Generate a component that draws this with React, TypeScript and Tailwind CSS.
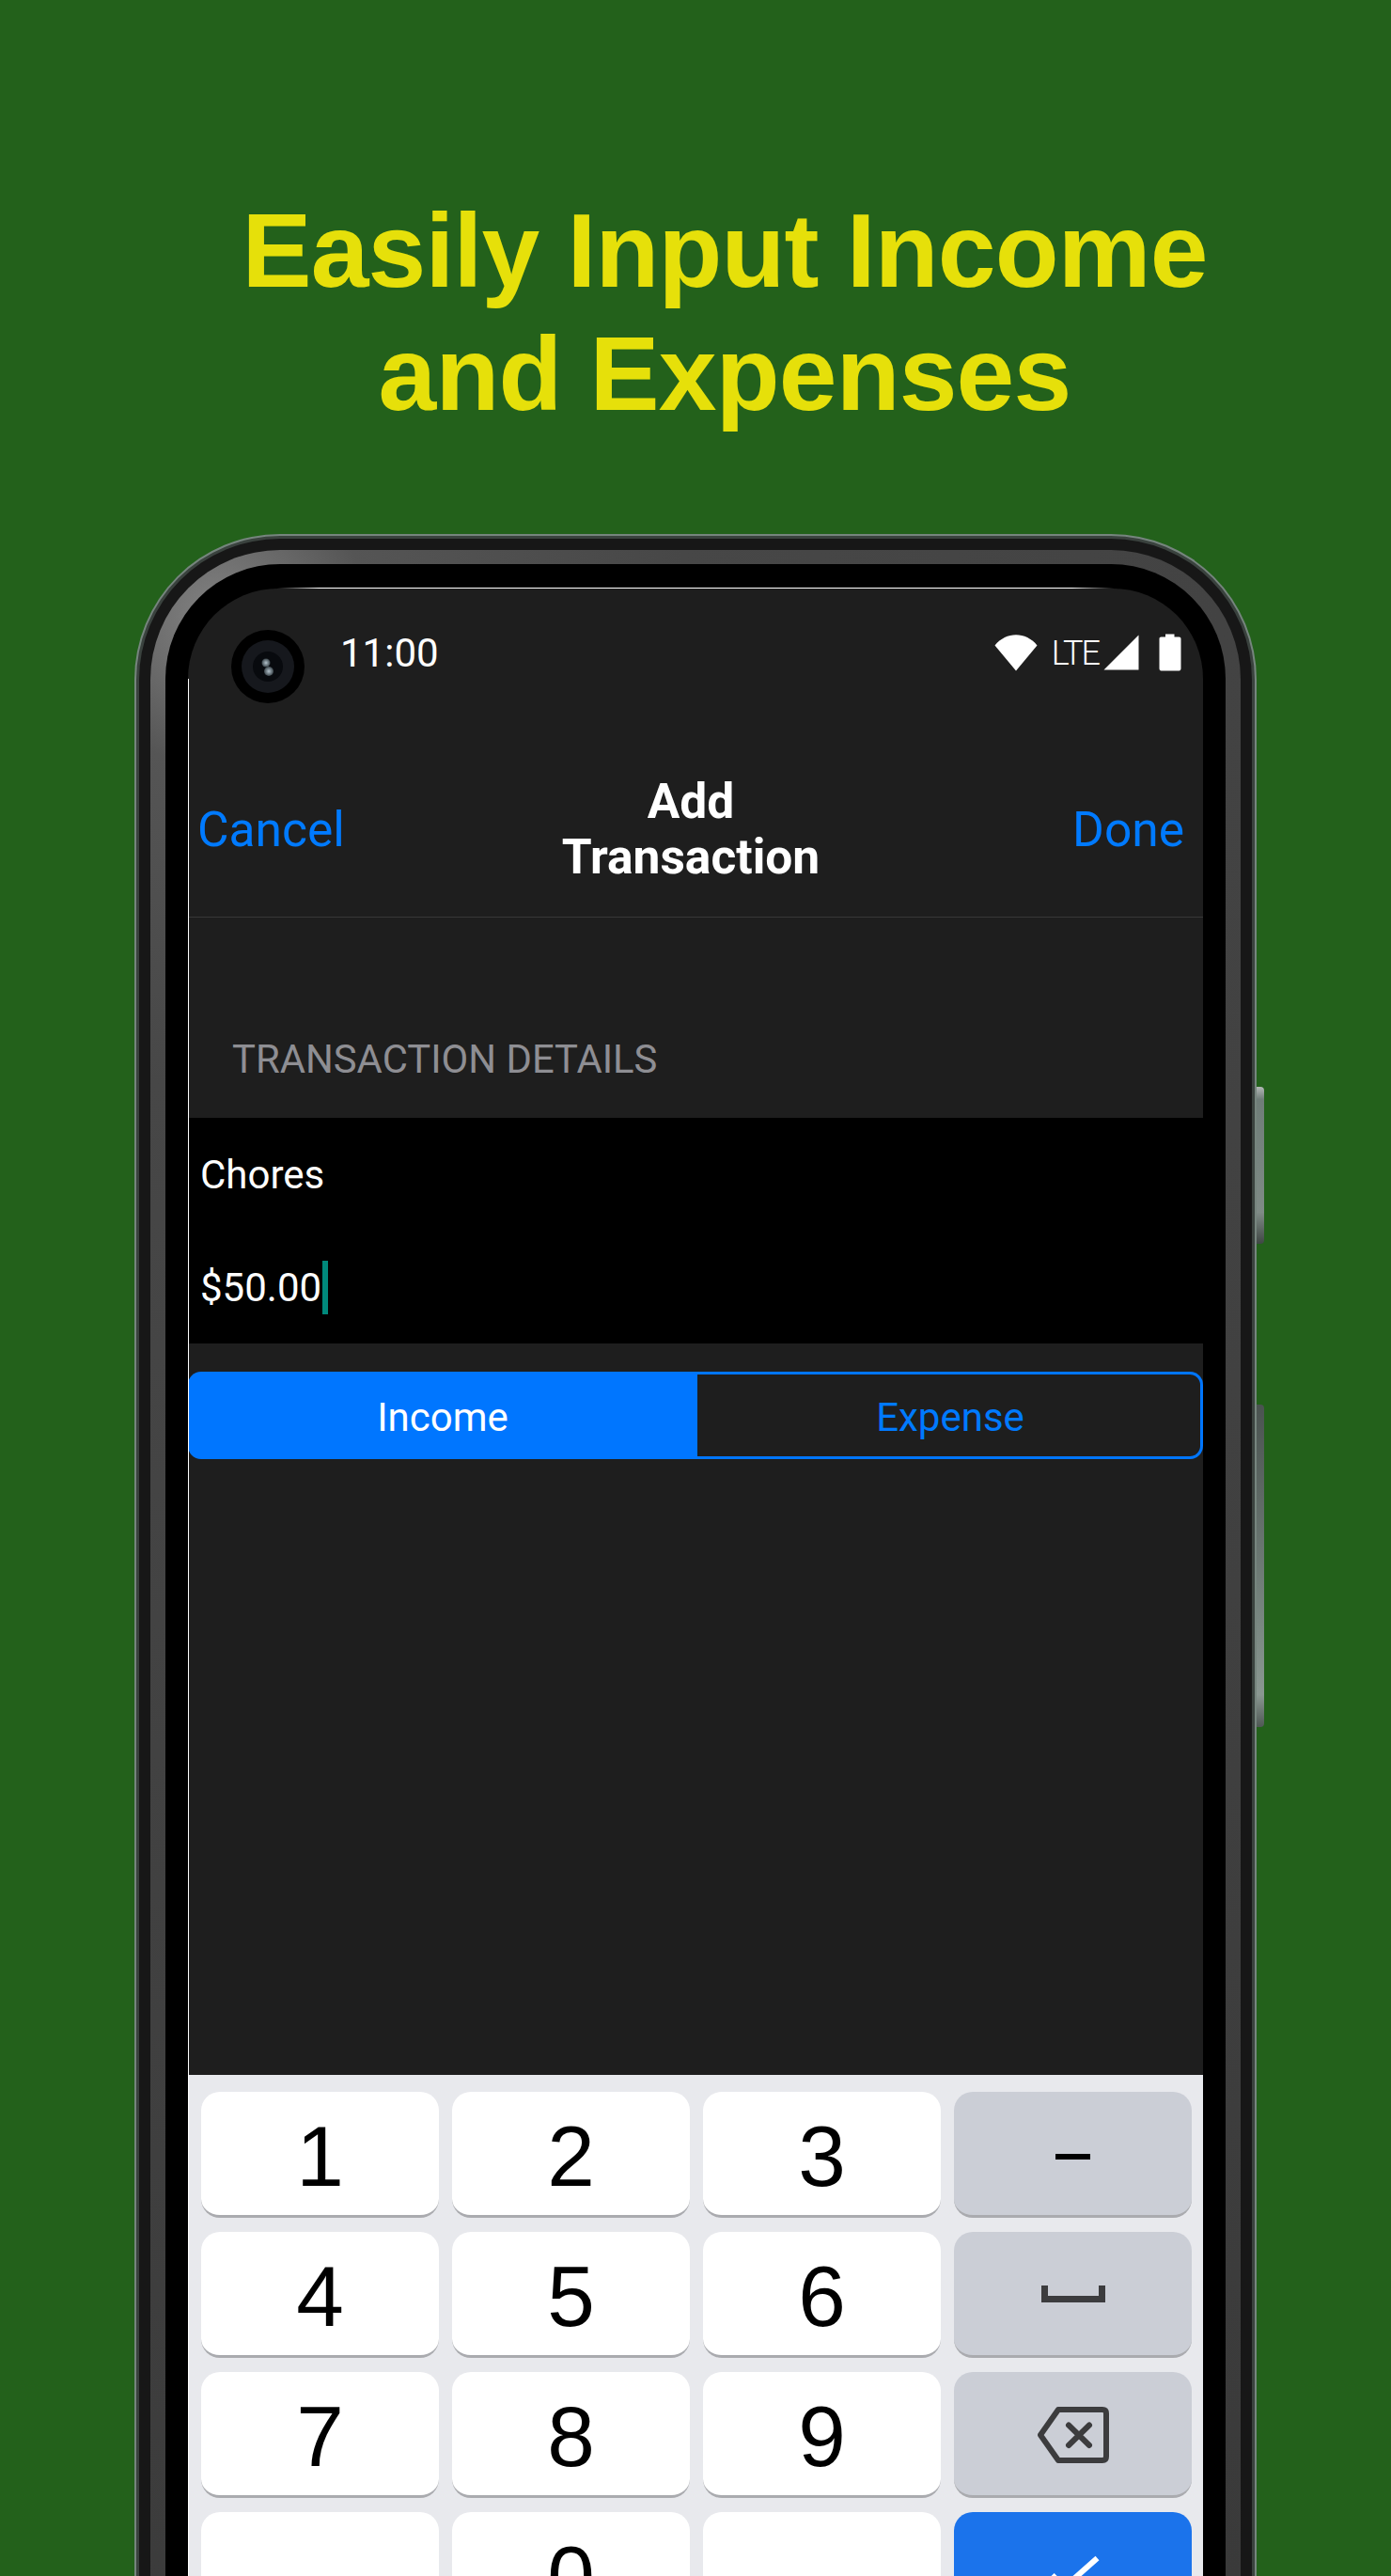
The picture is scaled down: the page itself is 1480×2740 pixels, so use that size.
const digits = [
  ["1", "2", "3"],
  ["4", "5", "6"],
  ["7", "8", "9"],
  ["", "0", ""],
];

function Key({ label }: { label: string }) {
  return (
    <div className="flex h-[134px] items-center justify-center rounded-[20px] border-b-[3px] border-[#aaabaf] bg-white pt-[6px] font-['Liberation_Sans',sans-serif] text-[91px] leading-none text-black">
      {label}
    </div>
  );
}

function SideKey({ children, done }: { children: React.ReactNode; done?: boolean }) {
  return (
    <div
      className={
        done
          ? "flex h-[134px] items-center justify-center rounded-[20px] bg-[#1b73eb]"
          : "flex h-[134px] items-center justify-center rounded-[20px] border-b-[3px] border-[#aaabaf] bg-[#cbced6]"
      }
    >
      {children}
    </div>
  );
}

function Camera() {
  return (
    <svg width="78" height="78" viewBox="0 0 78 78">
      <defs>
        <radialGradient id="glint">
          <stop offset="0%" stopColor="#b4c3cc" />
          <stop offset="100%" stopColor="#3c464c" />
        </radialGradient>
      </defs>
      <circle cx="39" cy="39" r="39" fill="#000" />
      <circle cx="39" cy="39" r="28" fill="#16181d" />
      <circle cx="39" cy="39" r="16" fill="#080a0e" />
      <circle cx="37" cy="35" r="4.500" fill="url(#glint)" />
      <circle cx="40" cy="44" r="5" fill="url(#glint)" />
    </svg>
  );
}

function StatusIcons() {
  return (
    <div className="flex items-center">
      <svg width="46" height="39" viewBox="0 0 46 39">
        <path d="M0.500 11.500C12.500 -3.500 33.500 -3.500 45.500 11.500L23 38.500Z" fill="#fff" />
      </svg>
      <span className="mt-[1px] ml-[15px] text-[36px] leading-none font-light tracking-[-2px] text-white">LTE</span>
      <svg className="ml-[5px]" width="38" height="38" viewBox="0 0 38 38">
        <path d="M37.500 0.500V37.500H0.500Z" fill="#fff" />
      </svg>
      <svg className="ml-[21px]" width="24" height="40" viewBox="0 0 24 40">
        <path d="M7 0.500H16.500V3.500H21.500C22.800 3.500 23.500 4.300 23.500 5.500V37C23.500 38.400 22.800 39.500 21.500 39.500H2.500C1.200 39.500 0.500 38.400 0.500 37V5.500C0.500 4.300 1.200 3.500 2.500 3.500H7Z" fill="#fff" />
      </svg>
    </div>
  );
}

export default function App() {
  return (
    <div className="h-[2740px] w-[1480px] overflow-hidden bg-[#23611b] font-['Roboto',sans-serif]">
      <h1 className="pt-[202px] pl-[62px] text-center font-['Liberation_Sans',sans-serif] text-[111px] leading-[131px] font-bold tracking-[-0.8px] text-[#e6e00a]">
        Easily Input Income
        <br />
        and Expenses
      </h1>

      <div className="relative mt-[104px] ml-[143px] w-[1194px]">
        <div className="absolute top-[588px] -right-2 h-[167px] w-2 rounded-r-sm bg-[linear-gradient(180deg,#b4b9b7,#6f7d78_8%,#7f8b86_80%,#3f4744)]" />
        <div className="absolute top-[926px] -right-2 h-[343px] w-2 rounded-r-sm bg-[linear-gradient(180deg,#4a5350,#7b8983_70%,#8a9791_90%,#4f5855)]" />

        <div className="rounded-t-[155px] bg-[#76857e] px-[2px] pt-[2px]">
          <div className="rounded-t-[153px] bg-[#3a423e] px-[3px] pt-[3px]">
            <div className="rounded-t-[150px] bg-[#171717] px-[12px] pt-[12px]">
              <div className="rounded-t-[138px] bg-[radial-gradient(circle_at_70px_70px,#828282,#555555_160px,#474747_500px,#3a3a3a)] px-[16px] pt-[15px]">
                <div className="rounded-t-[122px] bg-black px-[24px] pt-[26px]">
                  <div className="relative h-[2114px] overflow-hidden rounded-t-[96px] bg-[#1e1e1e]">
                    <div className="flex h-[130px] items-start pt-[44px] pr-[23px] pl-[46px]">
                      <Camera />
                      <span className="mt-[-1px] ml-[38px] text-[42px] leading-[52px] text-white">11:00</span>
                      <div className="mt-[4px] ml-auto">
                        <StatusIcons />
                      </div>
                    </div>

                    <div className="grid h-[220px] grid-cols-[1fr_auto_1fr] items-center border-b border-[#383838] pt-[33px] pr-[20px] pl-[10px] text-[51.5px] leading-[59px] text-[#007aff]">
                      <span>Cancel</span>
                      <span className="text-center font-bold text-white">
                        Add
                        <br />
                        Transaction
                      </span>
                      <span className="text-right">Done</span>
                    </div>

                    <div className="flex h-[213px] items-end pb-[37px] pl-[47px] text-[41.8px] leading-[50px] text-[#8e8e93]">
                      TRANSACTION DETAILS
                    </div>

                    <div className="bg-black pl-[13px] text-[42px] text-white">
                      <div className="flex h-[120px] items-center">Chores</div>
                      <div className="flex h-[120px] items-center">
                        $50.00
                        <span className="ml-[1px] h-[57px] w-[6px] bg-[#00897b]" />
                      </div>
                    </div>

                    <div className="mt-[30px] flex h-[93px] text-[42px]">
                      <div className="flex w-[542px] items-center justify-center rounded-l-[14px] bg-[#0076ff] pt-[4px] text-white">Income</div>
                      <div className="flex flex-1 items-center justify-center rounded-r-[14px] border-[3px] border-l-0 border-[#0076ff] pt-[4px] pl-[3px] text-[#007aff]">
                        Expense
                      </div>
                    </div>

                    <div className="mt-[655px] bg-[#e8e9ed] pt-[18px] pr-[12px] pb-[20px] pl-[14px]">
                      <div className="grid grid-cols-4 gap-x-[14px] gap-y-[15px]">
                        {digits.map((row, i) => (
                          <div key={i} className="contents">
                            {row.map((d, j) => (
                              <Key key={j} label={d} />
                            ))}
                            {i === 0 && (
                              <SideKey>
                                <div className="mt-[6px] h-[6px] w-[37px] bg-black" />
                              </SideKey>
                            )}
                            {i === 1 && (
                              <SideKey>
                                <svg width="68" height="18" viewBox="0 0 68 18">
                                  <path d="M3.500 0V14.500H64.500V0" fill="none" stroke="#3c3c3e" strokeWidth="7" />
                                </svg>
                              </SideKey>
                            )}
                            {i === 2 && (
                              <SideKey>
                                <svg className="mt-[3px]" width="76" height="60" viewBox="0 0 76 60">
                                  <path d="M22 3H69Q73 3 73 7V53Q73 57 69 57H22L3 30Z" fill="none" stroke="#3c3c3e" strokeWidth="6" strokeLinejoin="round" />
                                  <path d="M33 19.500L55 41M55 19.500L33 41" stroke="#3c3c3e" strokeWidth="6" strokeLinecap="round" />
                                </svg>
                              </SideKey>
                            )}
                            {i === 3 && (
                              <SideKey done>
                                <svg width="60" height="60" viewBox="0 0 60 60">
                                  <path d="M7.500 30L20.500 43L55.500 12" fill="none" stroke="#fff" strokeWidth="6" />
                                </svg>
                              </SideKey>
                            )}
                          </div>
                        ))}
                      </div>
                    </div>
                  </div>
                </div>
              </div>
            </div>
          </div>
        </div>

        <div className="absolute top-[57px] left-[152px] h-px w-[890px] bg-[linear-gradient(90deg,#fff0,#fff_5%,#fff_95%,#fff0)]" />
        <div className="absolute top-[154px] left-[57px] h-[2100px] w-px bg-white" />
      </div>
    </div>
  );
}
